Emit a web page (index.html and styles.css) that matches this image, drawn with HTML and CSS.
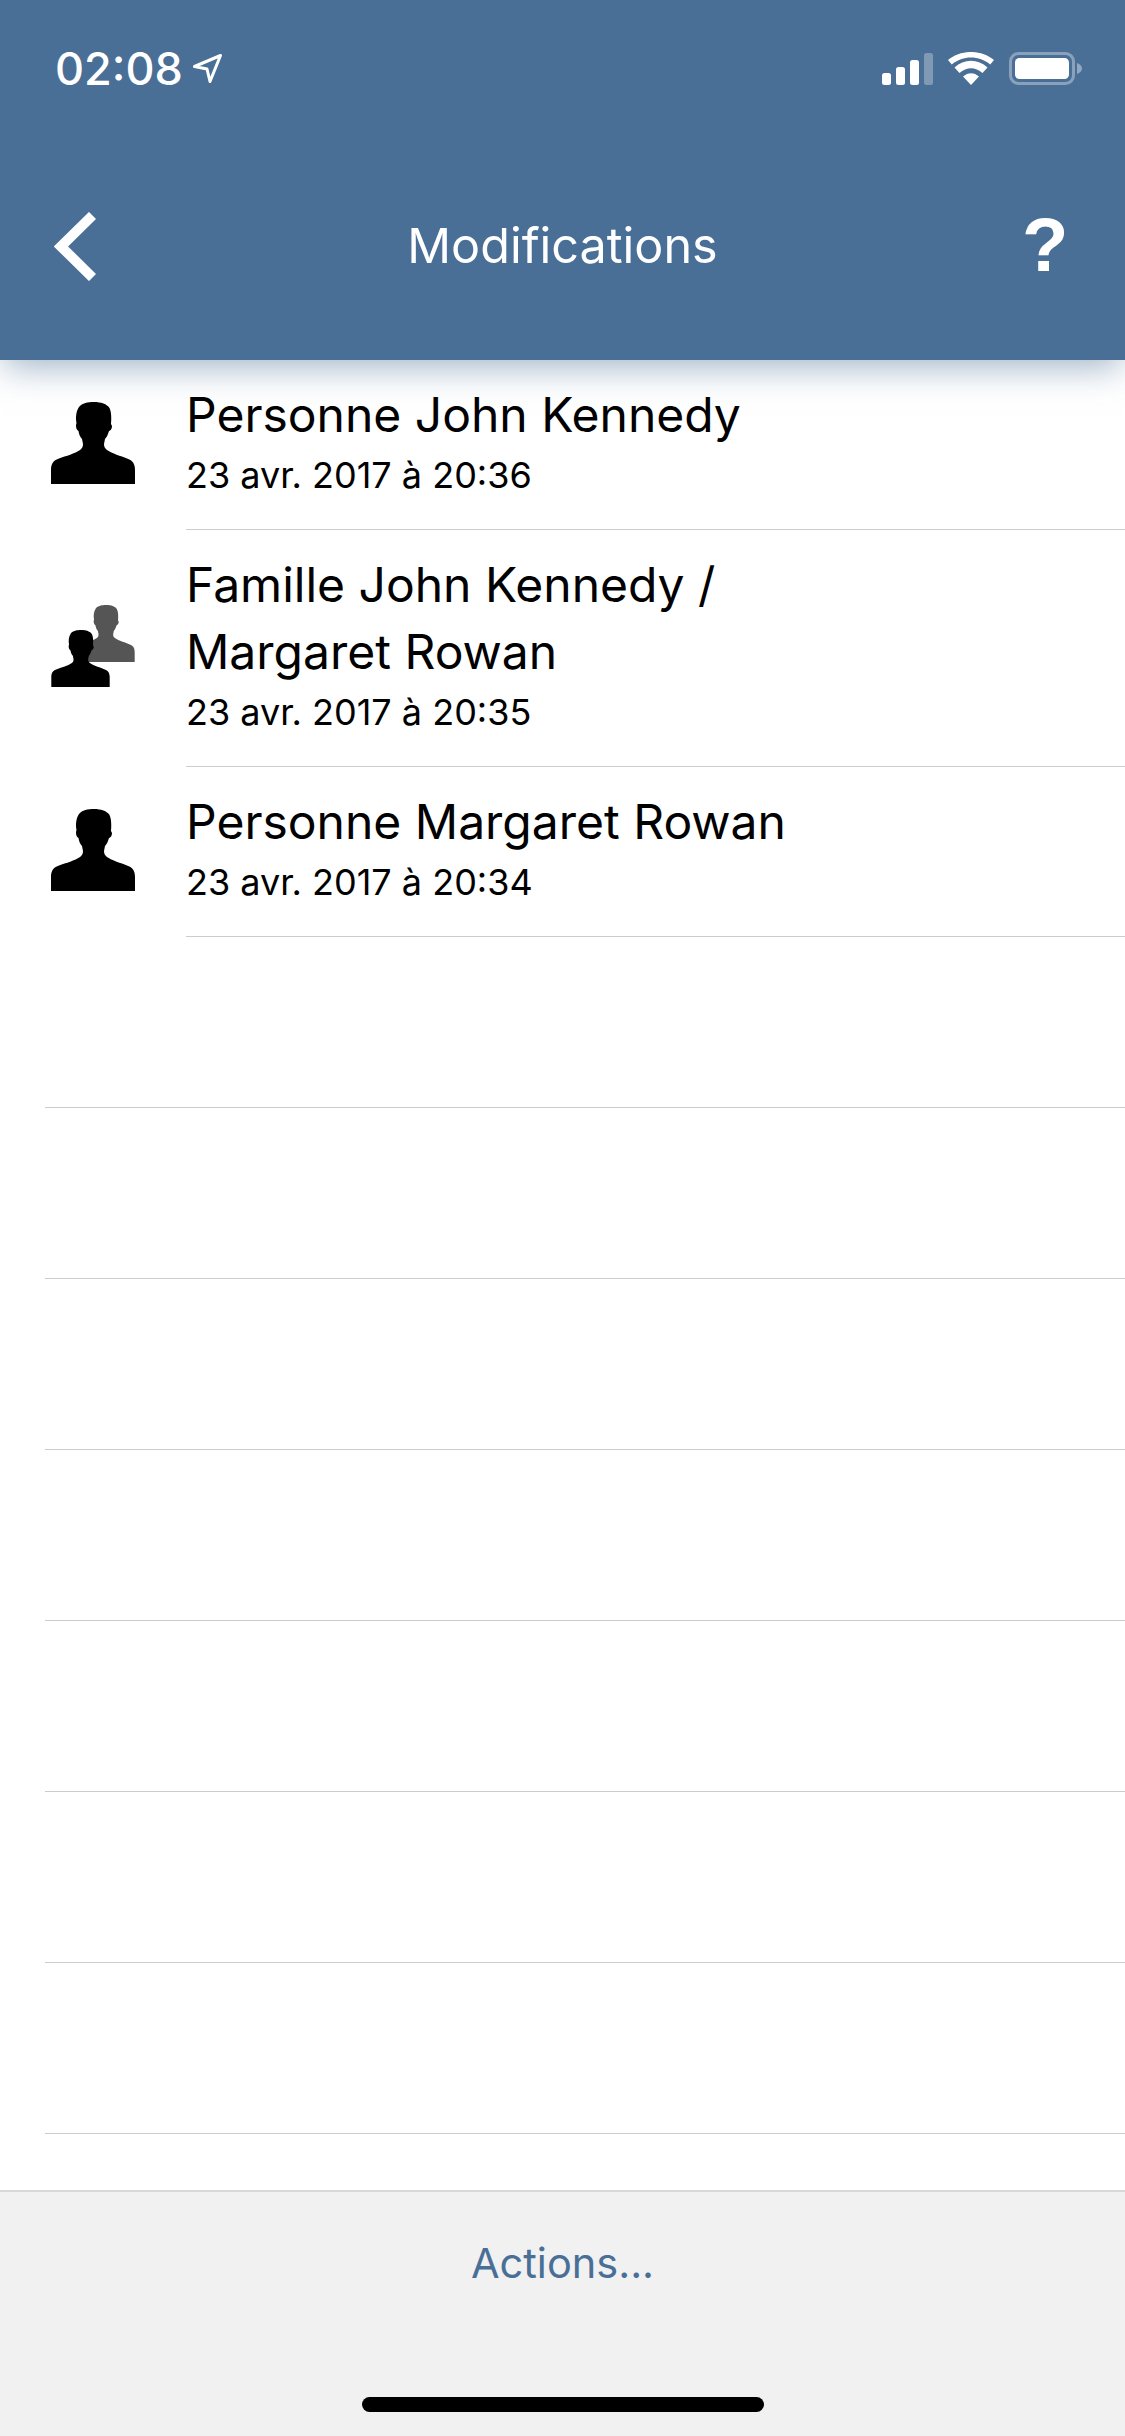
FILE: index.html
```html
<!DOCTYPE html>
<html lang="fr">
<head>
<meta charset="utf-8">
<title>Modifications</title>
<link rel="stylesheet" href="styles.css">
</head>
<body>
<svg class="defs" width="0" height="0" aria-hidden="true">
  <symbol id="person" viewBox="0 0 84 82">
    <path d="M0 82V68C0 61 3 58 8 56.500C15 54 24 51.500 29 48C31 46.500 32 45 32 42L31 37C29 35 28 32 27.500 29C25.500 28 25 26 25 23L25.500 21C24.500 16 25 9 28 5C31 1 37 0 43 0C50 0 56 2 58.500 6C60.500 10 60.500 17 60 22L61 24C61 27 59.500 28.500 58 29C57 32 56 35 54 37L53 42C53 45 54 46.500 56 48C61 51.500 70 54 76 56.500C81 58 84 61 84 68V82Z"/>
  </symbol>
</svg>
<div class="app">
  <header class="top">
    <div class="status">
      <div class="clock">
        <span class="time">02:08</span>
        <svg class="loc" viewBox="0 0 29 29"><path d="M1.500 12.500L27.500 1.500L17 27.500L14 15Z" fill="none" stroke="#fff" stroke-width="3" stroke-linejoin="round"/></svg>
      </div>
      <div class="sys">
        <svg class="signal" viewBox="0 0 51 32">
          <rect x="0" y="20" width="9" height="12" rx="2.5" fill="#fff"/>
          <rect x="14" y="14" width="9" height="18" rx="2.5" fill="#fff"/>
          <rect x="28" y="7" width="9" height="25" rx="2.5" fill="#fff"/>
          <rect x="42" y="0" width="9" height="32" rx="2.5" fill="#fff" fill-opacity=".3"/>
        </svg>
        <svg class="wifi" viewBox="0 0 46 33">
          <path d="M23 33L15 24.500C20 20 26 20 31 24.500Z" fill="#fff"/>
          <path d="M11.500 21L6.500 15.500C16 6.500 30 6.500 39.500 15.500L34.500 21C27.500 14.500 18.500 14.500 11.500 21Z" fill="#fff"/>
          <path d="M3.800 12.500L0 8C13 -2.700 33 -2.700 46 8L42.200 12.500C31 3.200 15 3.200 3.800 12.500Z" fill="#fff"/>
        </svg>
        <svg class="battery" viewBox="0 0 73 33">
          <rect x="1.500" y="1.500" width="63" height="30" rx="8" fill="none" stroke="#fff" stroke-opacity=".35" stroke-width="3"/>
          <rect x="6" y="6" width="54" height="21" rx="4.500" fill="#fff"/>
          <path d="M68 11C71 12 73 14 73 16.500C73 19 71 21 68 22Z" fill="#fff" fill-opacity=".4"/>
        </svg>
      </div>
    </div>
    <nav class="nav">
      <svg class="back" viewBox="0 0 42 69"><path d="M38.500 3.500L7 34.500L38.500 65.500" fill="none" stroke="#fff" stroke-width="10"/></svg>
      <h1 class="title">Modifications</h1>
      <span class="help">?</span>
    </nav>
  </header>

  <main class="list">
    <div class="row">
      <div class="ico"><svg class="person"><use href="#person"/></svg></div>
      <div class="body">
        <div class="name">Personne John Kennedy</div>
        <div class="date">23 avr. 2017 à 20:36</div>
      </div>
    </div>
    <div class="row">
      <div class="ico">
        <svg class="family" viewBox="0 0 84 82">
          <use href="#person" x="25" y="0" width="59" height="57" fill="#555"/>
          <use href="#person" x="0" y="25" width="59" height="57"/>
        </svg>
      </div>
      <div class="body">
        <div class="name">Famille John Kennedy /<br>Margaret Rowan</div>
        <div class="date">23 avr. 2017 à 20:35</div>
      </div>
    </div>
    <div class="row">
      <div class="ico"><svg class="person"><use href="#person"/></svg></div>
      <div class="body">
        <div class="name">Personne Margaret Rowan</div>
        <div class="date">23 avr. 2017 à 20:34</div>
      </div>
    </div>
    <div class="empty"></div>
    <div class="empty"></div>
    <div class="empty"></div>
    <div class="empty"></div>
    <div class="empty"></div>
    <div class="empty"></div>
    <div class="empty"></div>
  </main>

  <footer class="foot">
    <div class="actions">Actions...</div>
    <div class="home"></div>
  </footer>
</div>
</body>
</html>
```
FILE: styles.css
```css
* { box-sizing: border-box; }
html, body { margin: 0; padding: 0; background: #fff; }
body { font-family: Inter, "Noto Sans", sans-serif; color: #000; }
.defs { display: block; height: 0; }
.app { width: 1125px; height: 2436px; display: flex; flex-direction: column; overflow: hidden; }

.top {
  height: 360px;
  flex: none;
  background: #4a6f96;
  color: #fff;
  position: relative;
  z-index: 2;
  box-shadow: 0 10px 34px -4px rgba(74, 111, 150, .55);
  display: flex;
  flex-direction: column;
}
.status { height: 138px; padding: 52px 43px 0 55px; display: flex; justify-content: space-between; align-items: flex-start; }
.clock { display: flex; align-items: center; gap: 10px; height: 33px; }
.time { font-size: 45px; font-weight: 500; line-height: 33px; }
.loc { width: 29px; height: 29px; display: block; }
.sys { display: flex; align-items: flex-start; gap: 15px; }
.signal { width: 51px; height: 32px; margin-top: 1px; display: block; }
.wifi { width: 46px; height: 33px; display: block; }
.battery { width: 73px; height: 33px; display: block; }

.nav { flex: 1; display: grid; grid-template-columns: 1fr auto 1fr; align-items: center; padding: 0 54px 6px; }
.back { width: 42px; height: 69px; display: block; }
.title { margin: 0; font-size: 48.500px; font-weight: 400; line-height: 60px; text-align: center; }
.help { justify-self: end; margin: -3px 2.500px 0 0; font-family: "Liberation Sans", Arial, sans-serif; font-size: 76px; font-weight: 700; line-height: 80px; }

.list { flex: 1; min-height: 0; overflow: hidden; }
.row { display: flex; align-items: center; padding-left: 51px; }
.ico { width: 135px; flex: none; margin-bottom: 5px; }
.person, .family { width: 84px; height: 82px; display: block; }
.body { flex: 1; padding: 21px 0 27px; border-bottom: 1.5px solid #ccc; }
.name { font-size: 48px; line-height: 67px; }
.date { font-size: 36px; line-height: 54px; }
.empty { height: 171px; margin-left: 45px; border-bottom: 1.5px solid #ccc; }

.foot { height: 246px; flex: none; background: #f1f1f2; border-top: 2px solid #d8d8d8; display: flex; flex-direction: column; align-items: center; position: relative; }
.actions { margin-top: 46px; font-size: 41.500px; line-height: 50px; color: #4a6f96; }
.home { position: absolute; left: 362px; top: 205px; width: 402px; height: 15px; border-radius: 8px; background: #000; }
```
